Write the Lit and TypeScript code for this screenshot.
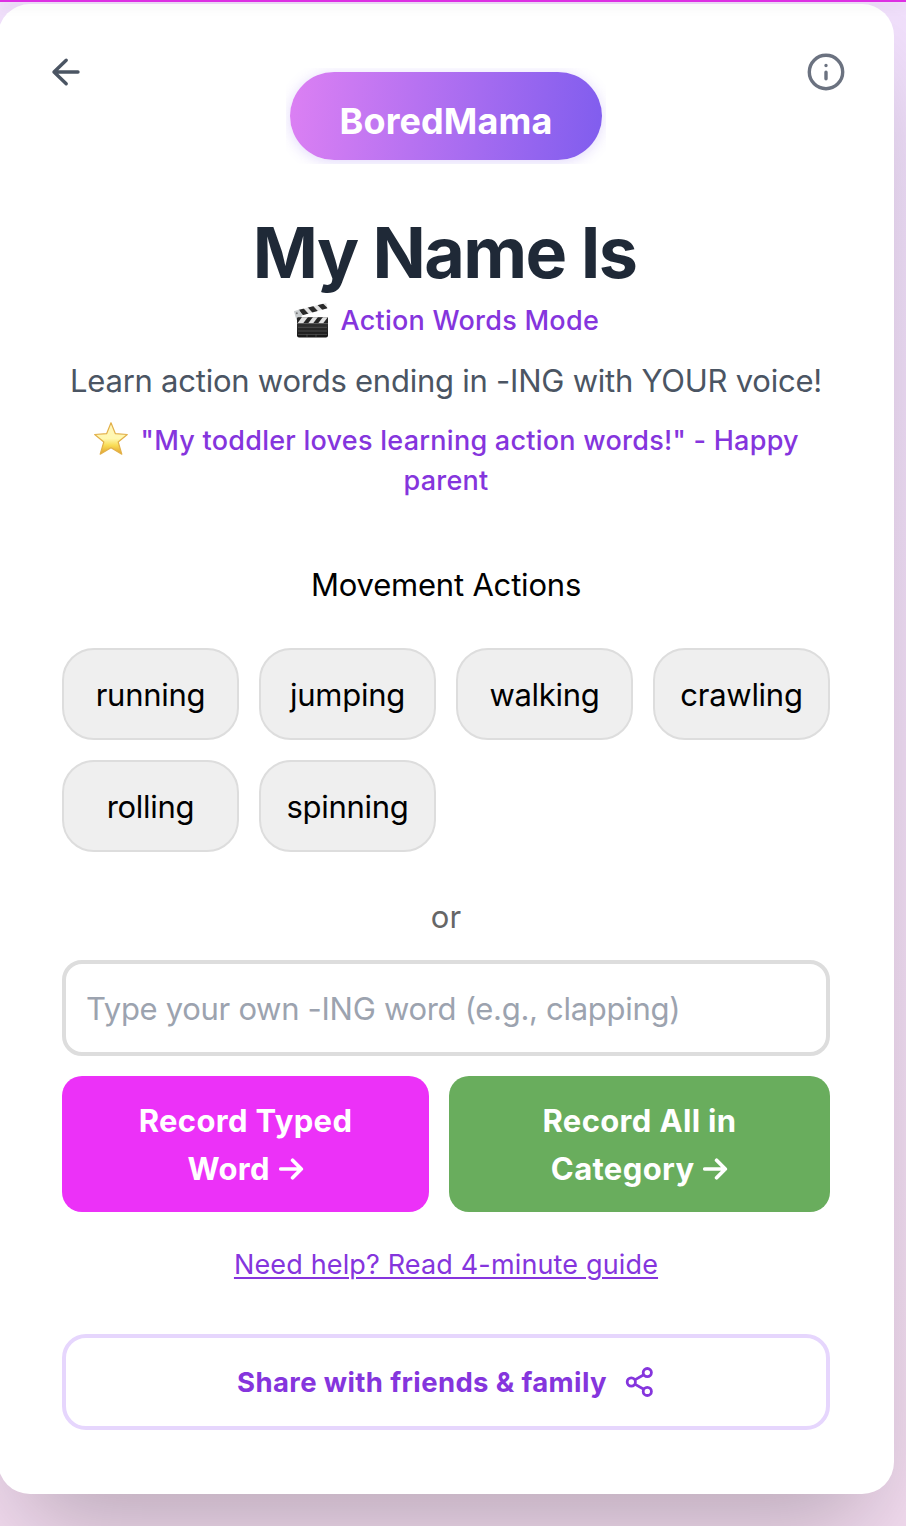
import { LitElement, html, css, svg } from "lit";
import { customElement, state } from "lit/decorators.js";

const clapper = html`<svg class="clapper" viewBox="0 0 36 36" aria-hidden="true">
  <defs>
    <linearGradient id="slate" x1="0" y1="0" x2="0" y2="1">
      <stop offset="0" stop-color="#3b3b3b" /><stop offset="1" stop-color="#161616" />
    </linearGradient>
    <clipPath id="arm"><path d="M1 9 33.2 1l1.3 5.2L3.2 15Z" /></clipPath>
    <clipPath id="bar"><path d="M4 15.3h31v6H4Z" /></clipPath>
  </defs>
  <path d="M1 9 33.2 1l1.3 5.2L3.2 15Z" fill="#e2e2e2" />
  <g clip-path="url(#arm)" fill="#2a2a2a">
    <path d="M4 6l5-1.2 7 7.5-5.5 1.4Z" /><path d="M13.5 4l5.5-1.2 6.5 7-5.5 1.4Z" /><path d="M23.5 2l5.5-1.5 6 6-5 2Z" />
  </g>
  <path d="M1 9.3 3.4 18l6-4-3-6Z" fill="#c9cdcf" />
  <circle cx="3.8" cy="11.3" r="1" fill="#777" /><circle cx="5.2" cy="16" r="1" fill="#777" />
  <path d="M4 15.3h31v18.2a2 2 0 0 1-2 2H6a2 2 0 0 1-2-2Z" fill="url(#slate)" />
  <path d="M4 15.3h31v6H4Z" fill="#e2e2e2" />
  <g clip-path="url(#bar)" fill="#252525">
    <path d="M3 22V17l2-2h4l-5 7Z" /><path d="M15 15h5l-5 6.5h-5Z" /><path d="M25 15h5l-5 6.5h-5Z" /><path d="M35 15h2v6.5h-7Z" />
  </g>
  <path d="M5 25.3h29M5 29h29M5 32.4h29M14 32.4v2.5M23 32.4v2.5" stroke="#666" stroke-width=".6" />
</svg>`;

const star = html`<svg class="star" viewBox="0 0 36 36" aria-hidden="true">
  <defs>
    <linearGradient id="gold" x1="0" y1="0" x2="0" y2="1">
      <stop offset="0" stop-color="#fff6bd" /><stop offset=".5" stop-color="#fff8b0" />
      <stop offset=".72" stop-color="#f9dc55" /><stop offset="1" stop-color="#e0a02c" />
    </linearGradient>
  </defs>
  <path d="M18 1.7 22.4 12.7 34.3 13.5 25.2 21 28.8 33.2 18 26.8 7.2 33.2 10.8 21 1.7 13.5 13.6 12.7Z"
    fill="url(#gold)" stroke="#e2b04a" stroke-width="1.2" stroke-linejoin="round" />
</svg>`;

const arrowShape = svg`<path d="M1.8 11h20.4M13.6 2.3 22.3 11l-8.7 8.7" />`;
const arrow = html`<svg class="arrow" viewBox="0 0 25 22" aria-hidden="true">${arrowShape}</svg>`;

@customElement("app-root")
export class AppRoot extends LitElement {
  @state() private words = ["running", "jumping", "walking", "crawling", "rolling", "spinning"];

  static styles = css`
    :host {
      display: block;
      height: 1526px;
      overflow: hidden;
      background: linear-gradient(180deg, #f1e0fc 0%, #f3dcf0 100%);
      font-family: Inter, "Liberation Sans", sans-serif;
      color: #000;
    }
    * { box-sizing: border-box; }
    button, input { font: inherit; margin: 0; }
    button { cursor: pointer; }
    .topbar {
      position: relative;
      z-index: 1;
      height: 2px;
      background: #dd2fe3;
      box-shadow: 0 4px 12px rgba(0, 0, 0, 0.15);
    }
    .card {
      width: 896px;
      height: 1490px;
      margin: 2px 0 0 -2px;
      padding: 44px 64px 0;
      border-radius: 32px;
      background: #fff;
      box-shadow: 0 50px 100px -24px rgba(0, 0, 0, 0.25);
      display: flex;
      flex-direction: column;
      text-align: center;
    }
    .head {
      display: flex;
      justify-content: space-between;
      height: 116px;
      margin: 0 -16px;
    }
    .icon-btn {
      width: 40px;
      height: 48px;
      padding: 0;
      border: 0;
      background: none;
      display: grid;
      place-items: center;
      fill: none;
      stroke-linecap: round;
      stroke-linejoin: round;
    }
    .back { stroke: #4b5563; stroke-width: 3.4; }
    .info { stroke: #6b7280; stroke-width: 3.4; }
    .logo {
      width: 320px;
      height: 96px;
      margin-top: 20px;
      padding: 3.5px 4px 4px;
      overflow: hidden;
    }
    .logo-pill {
      height: 88.5px;
      border-radius: 44px;
      padding-top: 10px;
      background: linear-gradient(96deg, #dc80f3 0%, #805dee 100%);
      box-shadow: 0 2px 14px rgba(128, 93, 238, 0.24);
      color: #fff;
      font-size: 36px;
      line-height: 79px;
      font-weight: 700;
      letter-spacing: 0.1px;
    }
    h1 {
      margin: 48px 0 0;
      padding-right: 3px;
      height: 89px;
      font-size: 70px;
      line-height: 81px;
      font-weight: 700;
      letter-spacing: -1.6px;
      color: #1f2937;
    }
    .mode, .quote {
      margin: 0;
      height: 40px;
      font-size: 27px;
      line-height: 40px;
      font-weight: 500;
      letter-spacing: 0.26px;
      color: #8535dd;
    }
    .clapper, .star {
      width: 36px;
      height: 36px;
      margin: -8px 4px -8px 0;
      position: relative;
      top: -8px;
      vertical-align: -7px;
    }
    .clapper { top: -7px; }
    .lead {
      margin: 16px -20px;
      font-size: 31px;
      line-height: 48px;
      letter-spacing: -0.24px;
      color: #4b5563;
    }
    .quote { height: 80px; margin-bottom: 60px; }
    h2 {
      margin: 0 0 39px;
      font-size: 31px;
      line-height: 48px;
      font-weight: 400;
      letter-spacing: -0.2px;
    }
    .words {
      display: grid;
      grid-template-columns: repeat(4, 1fr);
      gap: 20px;
    }
    .word {
      height: 92px;
      padding: 0;
      border: 2px solid #ddd;
      border-radius: 32px;
      background: #efefef;
      color: #000;
      font-size: 31px;
      letter-spacing: -0.28px;
    }
    .or {
      margin: 41px 0 19px;
      font-size: 31px;
      line-height: 48px;
      color: #666;
    }
    .field {
      height: 96px;
      padding: 0 20px;
      border: 4px solid #ddd;
      border-radius: 20px;
      background: #fff;
      font-size: 31px;
      letter-spacing: -0.3px;
      outline: none;
    }
    .field::placeholder { color: #9ca3af; opacity: 1; }
    .actions {
      display: grid;
      grid-template-columns: 367px 381px;
      gap: 20px;
      margin-top: 20px;
    }
    .action {
      height: 136px;
      padding: 2px 40px 0;
      border: 0;
      border-radius: 20px;
      color: #fff;
      font-size: 31px;
      line-height: 48px;
      font-weight: 650;
      letter-spacing: 0.35px;
    }
    .typed { background: #ec31f8; }
    .all { background: #69ad5d; }
    .arrow {
      width: 25px;
      height: 22px;
      margin-left: 1px;
      vertical-align: 0;
      fill: none;
      stroke: #fff;
      stroke-width: 3.7;
      stroke-linecap: round;
      stroke-linejoin: round;
    }
    .help {
      align-self: center;
      margin: 33px 0 49px;
      font-size: 27px;
      line-height: 40px;
      letter-spacing: 0.15px;
      color: #8535dd;
      text-decoration: underline;
      text-decoration-thickness: 2px;
      text-underline-offset: 3px;
    }
    .share {
      height: 96px;
      display: flex;
      align-items: center;
      justify-content: center;
      gap: 18px;
      border: 4px solid #e6d6fd;
      border-radius: 24px;
      background: #fff;
      color: #8535dd;
      font-size: 27.5px;
      font-weight: 650;
      letter-spacing: 0.37px;
    }
    .share svg {
      fill: none;
      stroke: currentColor;
      stroke-width: 2.8;
    }
  `;

  render() {
    return html`
      <div class="topbar"></div>
      <main class="card">
        <header class="head">
          <button class="icon-btn back" aria-label="Back">
            <svg width="40" height="40" viewBox="0 0 40 40"><path d="M32 20H8M20.2 8.2 8 20l12.2 11.8" /></svg>
          </button>
          <div class="logo"><div class="logo-pill">BoredMama</div></div>
          <button class="icon-btn info" aria-label="Info">
            <svg width="40" height="40" viewBox="0 0 40 40">
              <circle cx="20" cy="20" r="16.7" /><path d="M20 20.2v6.6M20 13.4v.1" />
            </svg>
          </button>
        </header>
        <h1>My Name Is</h1>
        <p class="mode">${clapper} Action Words Mode</p>
        <p class="lead">Learn action words ending in -ING with YOUR voice!</p>
        <p class="quote">${star} "My toddler loves learning action words!" - Happy parent</p>
        <h2>Movement Actions</h2>
        <div class="words">
          ${this.words.map((word) => html`<button class="word">${word}</button>`)}
        </div>
        <div class="or">or</div>
        <input class="field" placeholder="Type your own -ING word (e.g., clapping)" />
        <div class="actions">
          <button class="action typed">Record Typed<br />Word ${arrow}</button>
          <button class="action all">Record All in<br />Category ${arrow}</button>
        </div>
        <a class="help">Need help? Read 4-minute guide</a>
        <button class="share">
          <span>Share with friends &amp; family</span>
          <svg width="30" height="32" viewBox="0 0 30 32">
            <circle cx="6.3" cy="16" r="4.1" /><circle cx="22.3" cy="6.6" r="4.1" /><circle cx="22.3" cy="25.4" r="4.1" />
            <path d="M9.8 13.9 18.8 8.7M9.8 18.1l9 5.2" />
          </svg>
        </button>
      </main>
    `;
  }
}
